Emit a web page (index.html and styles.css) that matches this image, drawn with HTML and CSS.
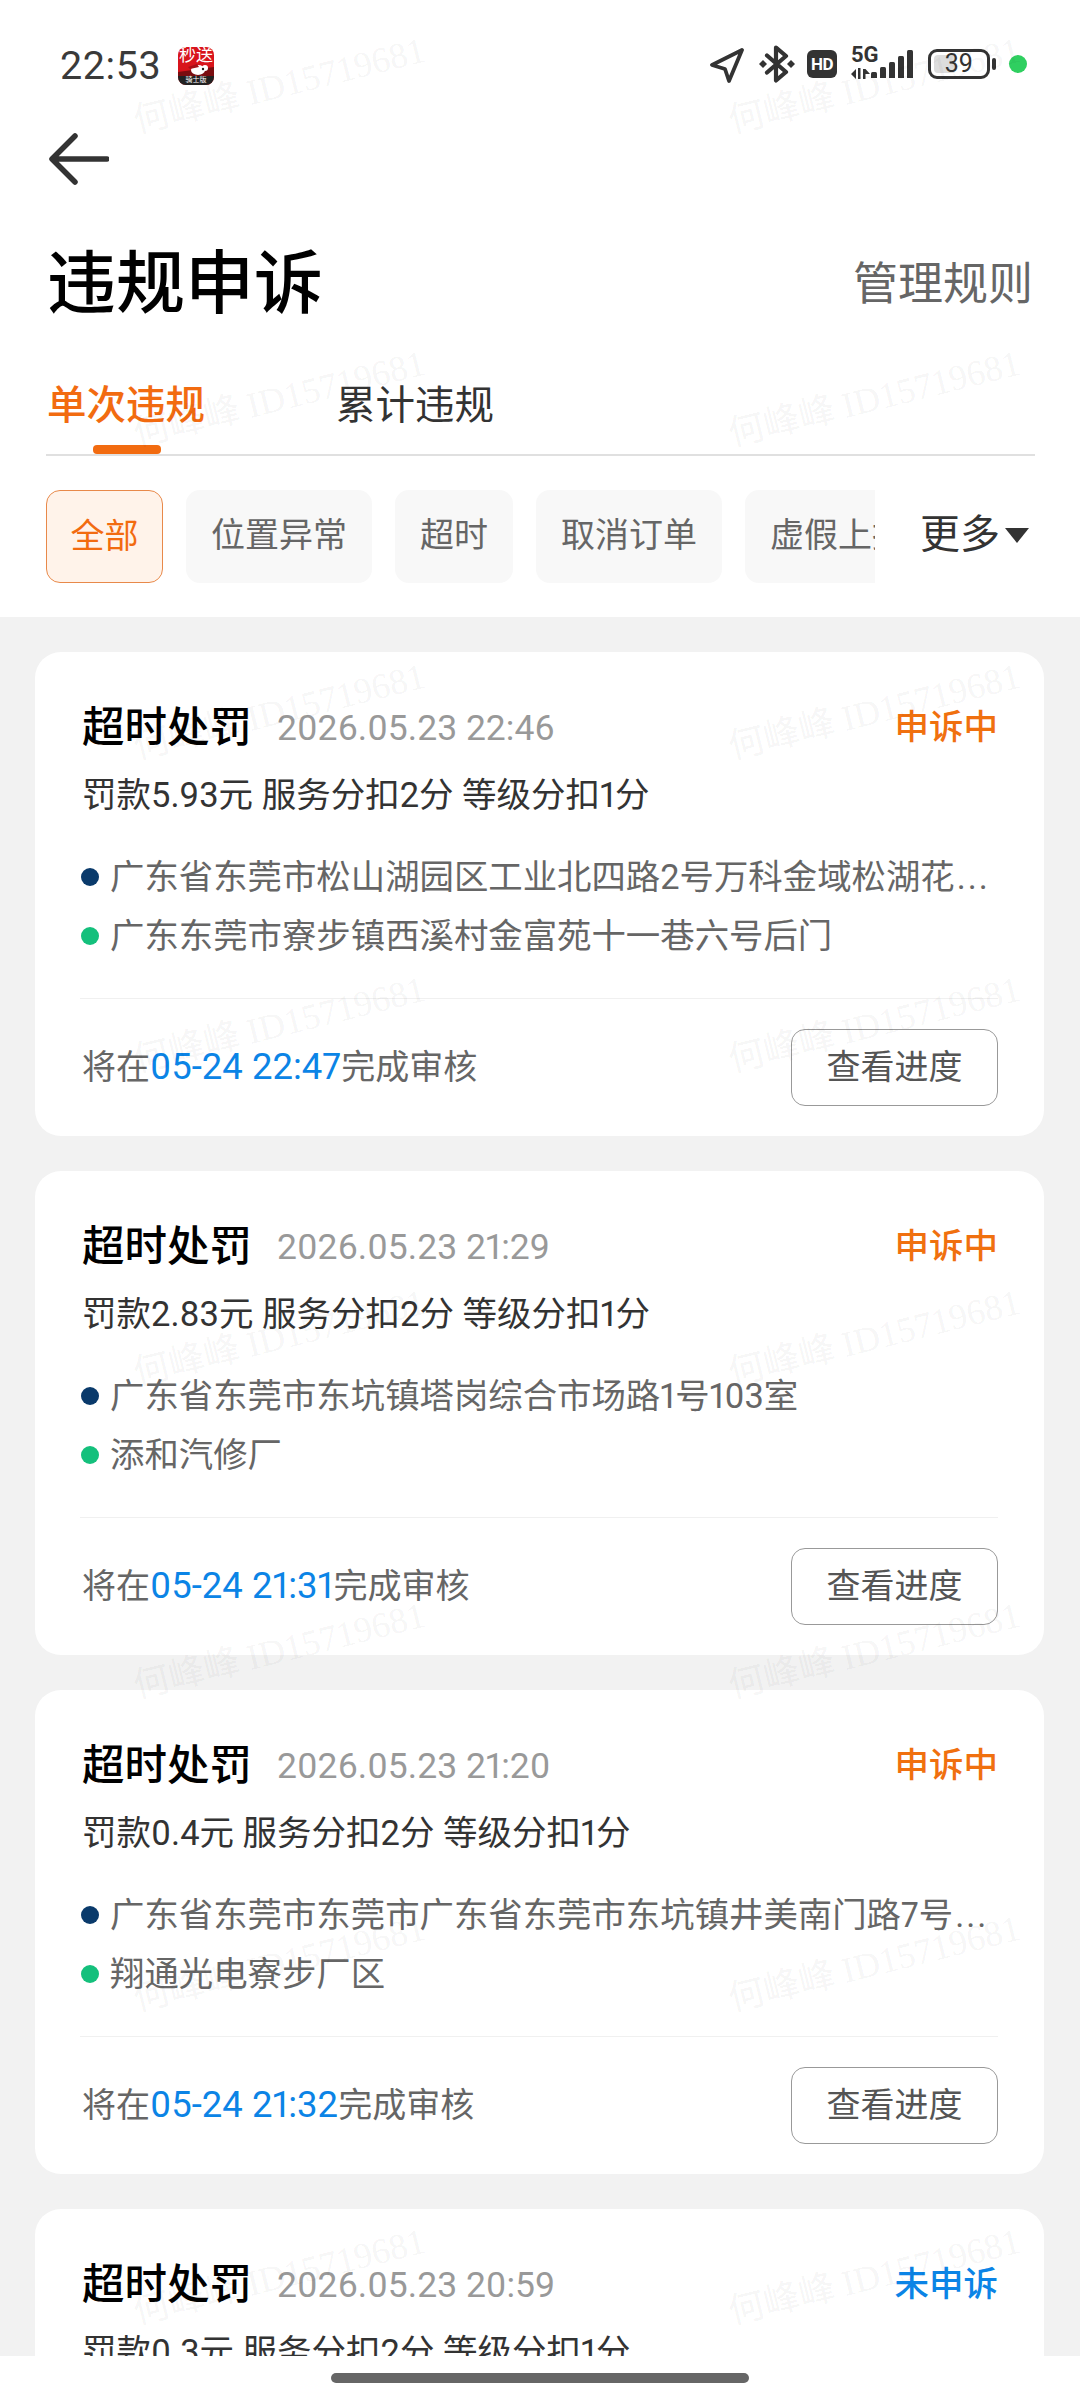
FILE: index.html
```html
<!DOCTYPE html>
<html lang="zh-CN">
<head>
<meta charset="utf-8">
<title>违规申诉</title>
<link rel="stylesheet" href="styles.css">
</head>
<body>
<div class="phone">
  <header class="head">
    <div class="status">
      <span class="time">22:53</span>
      <div class="appicon">
        <span class="app-name">秒送</span>
        <svg class="app-art" viewBox="0 0 36 12"><path d="M0 8 L36 3 V12 H0Z" fill="#7a0d10"/><ellipse cx="20" cy="6" rx="7" ry="5" fill="#fff"/><circle cx="27" cy="4" r="3" fill="#fff"/><path d="M10 3 L19 0 L21 3 L12 5Z" fill="#a80f16"/><circle cx="25" cy="5" r="1.200" fill="#222"/></svg>
        <span class="app-band">骑士版</span>
      </div>
      <div class="status-right">
        <svg class="ic-nav" viewBox="0 0 36 36"><path d="M33 2 L3 17 L16 21 L20 33 Z" fill="none" stroke="#333" stroke-width="3.800" stroke-linejoin="round"/></svg>
        <svg class="ic-bt" viewBox="0 0 36 38"><path d="M8 10.500 L27 27 L17 35.500 V2.500 L27 11 L8 27.500" fill="none" stroke="#333" stroke-width="4.200" stroke-linejoin="round" stroke-linecap="round"/><path d="M4 15 L8 19 L4 23 L0 19Z M32 15 L36 19 L32 23 L28 19Z" fill="#333"/></svg>
        <span class="hd">HD</span>
        <div class="net">
          <span class="fiveg">5G</span>
          <svg class="arrows" viewBox="0 0 20 11"><path d="M0 6 L5 1 V11Z M7 0 H9.500 V11 H7Z M12 1 H14.500 L19 6 H14.500 V11 H12Z" fill="#333"/></svg>
          <div class="bars"><i class="b1"></i><i class="b2"></i><i class="b3"></i><i class="b4"></i><i class="b5"></i></div>
        </div>
        <div class="battery"><span class="batt-fill"></span><span class="batt-num">39</span></div>
        <span class="batt-cap"></span>
        <span class="gdot"></span>
      </div>
    </div>
    <svg class="back" viewBox="0 0 60 52"><path d="M58 26 H5 M26 3 L3 26 L26 49" fill="none" stroke="#333" stroke-width="5.500" stroke-linecap="round" stroke-linejoin="round"/></svg>
    <div class="titlebar">
      <h1>违规申诉</h1>
      <span class="manage">管理规则</span>
    </div>
    <nav class="tabs">
      <span class="tab active">单次违规</span>
      <span class="tab">累计违规</span>
    </nav>
    <div class="filters">
      <div class="chips">
        <span class="chip on">全部</span>
        <span class="chip">位置异常</span>
        <span class="chip">超时</span>
        <span class="chip">取消订单</span>
        <span class="chip">虚假上报</span>
      </div>
      <span class="more">更多<i class="tri"></i></span>
    </div>
  </header>

  <main class="list">
    <article class="card">
      <div class="c-top"><b class="c-title">超时处罚</b><span class="c-date">2026.05.23 22:46</span><span class="c-st org">申诉中</span></div>
      <p class="c-fine">罚款5.93元 服务分扣2分 等级分扣1分</p>
      <p class="addr"><i class="dot navy"></i><span class="addr-t">广东省东莞市松山湖园区工业北四路2号万科金域松湖花<span class="dots">...</span></span></p>
      <p class="addr second"><i class="dot green"></i><span class="addr-t">广东东莞市寮步镇西溪村金富苑十一巷六号后门</span></p>
      <div class="c-foot"><span class="c-note">将在<em>05-24 22:47</em>完成审核</span><span class="btn">查看进度</span></div>
    </article>
    <article class="card">
      <div class="c-top"><b class="c-title">超时处罚</b><span class="c-date">2026.05.23 21:29</span><span class="c-st org">申诉中</span></div>
      <p class="c-fine">罚款2.83元 服务分扣2分 等级分扣1分</p>
      <p class="addr"><i class="dot navy"></i><span class="addr-t">广东省东莞市东坑镇塔岗综合市场路1号103室</span></p>
      <p class="addr second"><i class="dot green"></i><span class="addr-t">添和汽修厂</span></p>
      <div class="c-foot"><span class="c-note">将在<em>05-24 21:31</em>完成审核</span><span class="btn">查看进度</span></div>
    </article>
    <article class="card">
      <div class="c-top"><b class="c-title">超时处罚</b><span class="c-date">2026.05.23 21:20</span><span class="c-st org">申诉中</span></div>
      <p class="c-fine">罚款0.4元 服务分扣2分 等级分扣1分</p>
      <p class="addr"><i class="dot navy"></i><span class="addr-t">广东省东莞市东莞市广东省东莞市东坑镇井美南门路7号<span class="dots">...</span></span></p>
      <p class="addr second"><i class="dot green"></i><span class="addr-t">翔通光电寮步厂区</span></p>
      <div class="c-foot"><span class="c-note">将在<em>05-24 21:32</em>完成审核</span><span class="btn">查看进度</span></div>
    </article>
    <article class="card">
      <div class="c-top"><b class="c-title">超时处罚</b><span class="c-date">2026.05.23 20:59</span><span class="c-st blu">未申诉</span></div>
      <p class="c-fine">罚款0.3元 服务分扣2分 等级分扣1分</p>
    </article>
  </main>

  <footer class="home"><span class="home-bar"></span></footer>

  <div class="wm w1 a">何峰峰 ID15719681</div><div class="wm w1 b">何峰峰 ID15719681</div>
  <div class="wm w2 a">何峰峰 ID15719681</div><div class="wm w2 b">何峰峰 ID15719681</div>
  <div class="wm w3 a">何峰峰 ID15719681</div><div class="wm w3 b">何峰峰 ID15719681</div>
  <div class="wm w4 a">何峰峰 ID15719681</div><div class="wm w4 b">何峰峰 ID15719681</div>
  <div class="wm w5 a">何峰峰 ID15719681</div><div class="wm w5 b">何峰峰 ID15719681</div>
  <div class="wm w6 a">何峰峰 ID15719681</div><div class="wm w6 b">何峰峰 ID15719681</div>
  <div class="wm w7 a">何峰峰 ID15719681</div><div class="wm w7 b">何峰峰 ID15719681</div>
  <div class="wm w8 a">何峰峰 ID15719681</div><div class="wm w8 b">何峰峰 ID15719681</div>
</div>
</body>
</html>
```
FILE: styles.css
```css
* { box-sizing: border-box; margin: 0; padding: 0; }
html, body { width: 1080px; height: 2400px; overflow: hidden; background: #fff; }
body { font-family: Roboto, "Noto Sans CJK SC", sans-serif; font-variant-numeric: proportional-nums; }
i, em { font-style: normal; }
.phone { position: relative; width: 1080px; height: 2400px; display: flex; flex-direction: column; overflow: hidden; background: #f2f2f2; }

.head { background: #fff; height: 617px; flex: none; }
.status { height: 128px; display: flex; align-items: flex-start; padding: 47px 53px 0 60px; }
.time { font-size: 39.500px; line-height: 38px; color: #3a3a3a; letter-spacing: .6px; width: 118px; }
.appicon { width: 36px; height: 38px; border-radius: 8px; overflow: hidden; background: #d8141c; display: flex; flex-direction: column; align-items: center; }
.app-name { font-size: 17px; line-height: 17px; color: #fff; white-space: nowrap; }
.app-art { width: 36px; height: 12px; display: block; flex: none; }
.app-band { background: #222; color: #fff; font-size: 7px; line-height: 9px; width: 36px; text-align: center; flex: none; }

.status-right { margin-left: auto; display: flex; align-items: flex-start; }
.ic-nav { width: 36px; height: 36px; margin-top: 1px; }
.ic-bt { width: 36px; height: 38px; margin-left: 14px; margin-top: -2px; }
.hd { width: 30px; height: 28px; margin: 3px 0 0 12px; border-radius: 6px; background: #333; color: #fff; font-size: 17px; font-weight: 700; line-height: 28px; text-align: center; letter-spacing: -.5px; }
.net { position: relative; width: 62px; height: 32px; margin-left: 14px; }
.fiveg { position: absolute; left: 0; top: -3px; font-size: 22px; line-height: 22px; font-weight: 700; color: #333; }
.arrows { position: absolute; left: 0; top: 21px; width: 20px; height: 11px; }
.bars { position: absolute; right: 0; bottom: 1px; display: flex; align-items: flex-end; gap: 3px; }
.bars i { display: block; width: 6px; background: #333; border-radius: 1.500px 1.500px 0 0; }
.b1 { height: 6px; } .b2 { height: 11px; } .b3 { height: 16px; } .b4 { height: 22px; } .b5 { height: 28px; }
.battery { position: relative; width: 62px; height: 30px; margin: 2px 0 0 15px; border: 3.500px solid #333; border-radius: 9px; }
.batt-fill { position: absolute; left: 3px; top: 3px; bottom: 3px; width: 22px; background: #ddd; border-radius: 4px; }
.batt-num { position: absolute; inset: 0; text-align: center; font-size: 25px; line-height: 23px; color: #333; }
.batt-cap { width: 4px; height: 12px; margin: 11px 0 0 2px; background: #333; border-radius: 2px; }
.gdot { width: 18px; height: 18px; margin: 8px 0 0 13px; border-radius: 50%; background: #2fcf60; }

.back { display: block; width: 60px; height: 52px; margin: 5px 0 0 49px; }
.titlebar { display: flex; align-items: center; justify-content: space-between; padding: 0 47px 0 47px; margin-top: 60px; height: 80px; }
h1 { font-size: 69px; line-height: 80px; font-weight: 500; color: #000; }
.manage { font-size: 45px; line-height: 60px; color: #666; }
.tabs { position: relative; display: flex; margin: 57px 45px 0 46px; height: 74px; border-bottom: 2px solid #e0e0e0; padding-left: 1px; gap: 131px; }
.tab { font-size: 39.500px; line-height: 48px; color: #333; }
.tab.active { color: #f26b10; position: relative; font-weight: 500; }
.tab.active::after { content: ""; position: absolute; left: 46px; top: 63px; width: 68px; height: 9px; border-radius: 4px; background: #f26b10; }
.filters { display: flex; margin-top: 34px; padding-left: 46px; align-items: flex-start; }
.chips { width: 829px; height: 93px; display: flex; gap: 23px; overflow: hidden; flex: none; }
.chip { flex: none; height: 93px; padding: 0 25px; border-radius: 14px; background: #f8f8f8; color: #666; font-size: 34px; line-height: 91px; white-space: nowrap; }
.chip.on { padding: 0 23.500px; background: #fff3ea; border: 1.500px solid #e8894a; color: #f26b10; }
.more { display: flex; align-items: center; margin-left: 45px; font-size: 40px; line-height: 60px; color: #333; margin-top: 15px; white-space: nowrap; }
.tri { width: 0; height: 0; border-left: 12.500px solid transparent; border-right: 12.500px solid transparent; border-top: 15px solid #333; margin-left: 5px; }

.list { flex: 1; min-height: 0; overflow: hidden; padding: 35px 36px 0 35px; display: flex; flex-direction: column; gap: 35px; }
.card { flex: none; height: 484px; border-radius: 26px; background: #fff; padding: 46px 46px 0 47px; }
.c-top { display: flex; align-items: center; height: 60px; }
.c-title { font-size: 42.500px; line-height: 60px; font-weight: 500; color: #000; }
.c-date { font-size: 35.500px; margin-left: 25px; color: #999; line-height: 60px; }
.c-st { margin-left: auto; font-size: 34.500px; line-height: 60px; margin-top: -2px; font-weight: 500; }
.org { color: #f0700f; }
.blu { color: #0b84e6; }
.c-fine { font-size: 34.500px; line-height: 50px; color: #333; margin-top: 12px; white-space: nowrap; }
.addr { display: flex; align-items: center; height: 50px; margin: 32px 0 0 -1px; }
.addr.second { margin-top: 9px; }
.dot { flex: none; width: 18px; height: 18px; border-radius: 50%; margin-right: 11px; }
.navy { background: #0a3a6b; }
.green { background: #14c07c; }
.addr-t { flex: 1; min-width: 0; font-size: 34.400px; line-height: 50px; color: #666; white-space: nowrap; }
.dots { letter-spacing: 2px; margin-left: 2px; }
.c-foot { display: flex; align-items: center; justify-content: space-between; height: 137px; margin: 37px 0 0 -2px; border-top: 1.500px solid #f0f0f0; }
.c-note { font-size: 34px; line-height: 50px; color: #666; padding-left: 2px; }
.c-note em { color: #0b84e6; font-size: 36.500px; }
.btn { width: 207px; height: 77px; border: 1.500px solid #999; border-radius: 14px; font-size: 34px; line-height: 74px; color: #555; text-align: center; }

.home { flex: none; height: 44px; background: #fff; display: flex; justify-content: center; padding-top: 17px; position: relative; }
.home-bar { width: 418px; height: 10px; border-radius: 5px; background: #666; }

.wm { position: absolute; font-family: "Liberation Serif", "Noto Sans CJK SC", serif; font-size: 36px; line-height: 40px; color: rgba(0,0,0,.055); white-space: nowrap; transform-origin: 0 100%; transform: rotate(-14deg); pointer-events: none; }
.a { left: 139px; }
.b { left: 734px; }
.w1 { top: 101px; } .w2 { top: 414px; } .w3 { top: 727px; } .w4 { top: 1040px; }
.w5 { top: 1353px; } .w6 { top: 1666px; } .w7 { top: 1979px; } .w8 { top: 2292px; }
```
